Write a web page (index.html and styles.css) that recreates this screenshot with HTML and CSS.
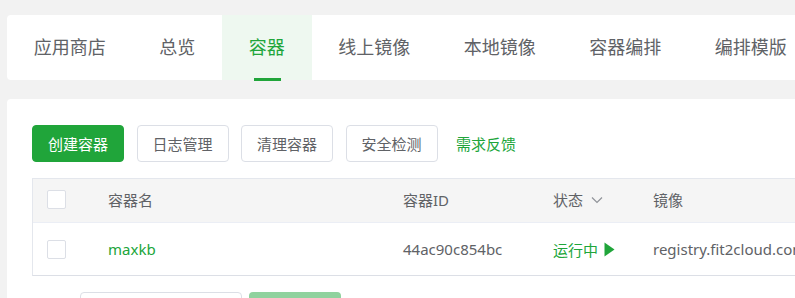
FILE: index.html
```html
<!DOCTYPE html>
<html lang="zh">
<head>
<meta charset="utf-8">
<link rel="stylesheet" href="styles.css">
</head>
<body>
<div class="page">
  <nav class="tabs">
    <div class="tab">应用商店</div>
    <div class="tab">总览</div>
    <div class="tab active">容器</div>
    <div class="tab">线上镜像</div>
    <div class="tab">本地镜像</div>
    <div class="tab">容器编排</div>
    <div class="tab">编排模版</div>
  </nav>
  <main class="card">
    <div class="toolbar">
      <button class="btn primary">创建容器</button>
      <button class="btn">日志管理</button>
      <button class="btn">清理容器</button>
      <button class="btn">安全检测</button>
      <span class="link">需求反馈</span>
    </div>
    <div class="table">
      <div class="row head">
        <div class="cell c1"><span class="check"></span></div>
        <div class="cell c2">容器名</div>
        <div class="cell c3">容器ID</div>
        <div class="cell c4">状态 <svg class="chev" width="12" height="8" viewBox="0 0 12 8"><path d="M1 1.5 L6 6.5 L11 1.5" fill="none" stroke="#909399" stroke-width="1.2"/></svg></div>
        <div class="cell c5">镜像</div>
      </div>
      <div class="row body">
        <div class="cell c1"><span class="check"></span></div>
        <div class="cell c2 green">maxkb</div>
        <div class="cell c3">44ac90c854bc</div>
        <div class="cell c4 green">运行中 <svg class="play" width="11" height="15" viewBox="0 0 11 15"><path d="M0.5 0.5 L10.5 7.5 L0.5 14.5 Z" fill="#20a53a"/></svg></div>
        <div class="cell c5">registry.fit2cloud.com/maxkb/maxkb</div>
      </div>
    </div>
    <div class="pager">
      <div class="pbox"></div>
      <div class="pbtn"></div>
    </div>
  </main>
</div>
</body>
</html>
```

FILE: styles.css
```css
html, body {
  margin: 0;
  padding: 0;
  overflow: hidden;
  background: #f2f2f2;
}
body {
  font-family: "Noto Sans", "Noto Sans CJK SC", sans-serif;
  color: #606266;
}
.page {
  width: 1000px;
  padding: 15px 0 0 7px;
}
.tabs {
  display: flex;
  background: #fff;
  border-radius: 4px 0 0 4px;
  height: 65px;
}
.tab {
  position: relative;
  padding: 0 26.75px;
  font-size: 18px;
  line-height: 65px;
  color: #606266;
  white-space: nowrap;
}
.tab.active {
  background: #eef8f0;
  color: #20a53a;
}
.tab.active::after {
  content: "";
  position: absolute;
  left: 32px;
  width: 27px;
  bottom: -1px;
  height: 3px;
  background: #20a53a;
}
.card {
  margin-top: 19px;
  background: #fff;
  border-radius: 4px 0 0 0;
  padding: 26px 0 0 25px;
  height: 200px;
}
.toolbar {
  display: flex;
  align-items: center;
  gap: 12.5px;
}
.btn {
  height: 37px;
  width: 92px;
  padding: 0;
  border: 1px solid #dcdfe6;
  border-radius: 4px;
  background: #fff;
  font-family: inherit;
  font-size: 15px;
  color: #606266;
}
.btn.primary {
  background: #20a53a;
  border-color: #20a53a;
  color: #fff;
}
.link {
  margin-left: 6px;
  font-size: 15px;
  color: #20a53a;
}
.table {
  margin-top: 16px;
  border-left: 1px solid #e4e7ed;
  border-top: 1px solid #e4e7ed;
  border-bottom: 1px solid #dcdfe6;
}
.row {
  display: flex;
  align-items: center;
}
.row.head {
  height: 44px;
  background: #f5f5f5;
  border-bottom: 1px solid #ebeef5;
  font-size: 15px;
  padding-bottom: 2px;
  box-sizing: border-box;
}
.row.body {
  height: 52px;
  font-size: 15px;
}
.cell {
  display: flex;
  align-items: center;
  white-space: nowrap;
  box-sizing: border-box;
}
.c1 { width: 59px; padding-left: 14px; }
.c2 { width: 295px; padding-left: 16px; }
.c3 { width: 150px; padding-left: 16px; }
.c4 { width: 100px; padding-left: 16px; }
.c5 { padding-left: 16px; }
.check {
  display: block;
  width: 17px;
  height: 17px;
  border: 1px solid #dcdfe6;
  border-radius: 2px;
  background: #fff;
}
.green { color: #20a53a; }
.chev { margin-left: 8px; }
.play { margin-left: 6px; }
.pager {
  display: flex;
  gap: 7px;
  margin-top: 16px;
  padding-left: 48px;
}
.pbox {
  width: 160px;
  height: 30px;
  border: 1px solid #dcdfe6;
  border-radius: 4px;
  background: #fff;
}
.pbtn {
  width: 92px;
  height: 32px;
  border-radius: 4px;
  background: #90d29e;
}
```
